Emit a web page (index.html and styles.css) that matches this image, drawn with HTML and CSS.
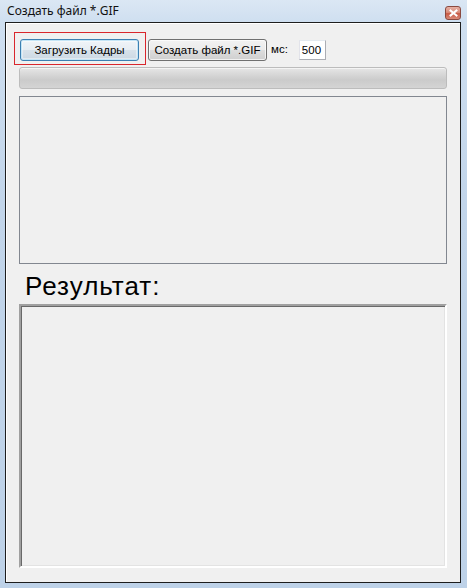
FILE: index.html
```html
<!DOCTYPE html>
<html lang="ru">
<head>
<meta charset="utf-8">
<title>Создать файл *.GIF</title>
<link rel="stylesheet" href="styles.css">
</head>
<body>
<div class="window">
  <div class="titlebar">
    <span class="title">Создать файл *.GIF</span>
    <div class="close">
      <svg width="9" height="8" viewBox="0 0 9 8"><path d="M1.5 1.5 L7.5 6.5 M7.5 1.5 L1.5 6.5" stroke="#fff" stroke-width="2" stroke-linecap="square"/></svg>
    </div>
  </div>
  <div class="client">
    <div class="toolbar">
      <div class="highlight">
        <button class="btn btn-default">Загрузить Кадры</button>
      </div>
      <button class="btn">Создать файл *.GIF</button>
      <span class="ms-label">мс:</span>
      <div class="num-input">500</div>
    </div>
    <div class="progress"></div>
    <div class="listbox"></div>
    <div class="result-label">Результат:</div>
    <div class="result-box"></div>
  </div>
</div>
</body>
</html>
```

FILE: styles.css
```css
html, body {
  margin: 0;
  padding: 0;
  width: 467px;
  height: 588px;
  overflow: hidden;
}
body {
  font-family: "Liberation Sans", Arial, sans-serif;
  background: #c3d6ea;
}
.window {
  width: 467px;
  height: 588px;
  display: flex;
  flex-direction: column;
  background: linear-gradient(to bottom, #dbe7f4 0px, #cfdff0 22px, #c2d5ea 200px, #bed2e8 588px);
}
.titlebar {
  height: 22px;
  position: relative;
  flex: none;
}
.title {
  position: absolute;
  left: 7px;
  top: 3px;
  font-family: "Noto Sans", "Open Sans", sans-serif;
  font-size: 12px;
  color: #111;
  line-height: 16px;
}
.close {
  position: absolute;
  left: 445px;
  top: 6px;
  width: 14px;
  height: 12px;
  border: 1px solid #8a4a40;
  border-radius: 3px;
  background: linear-gradient(to bottom, #e6b0a4 0%, #d98c7a 45%, #c85a45 55%, #d98a78 100%);
  display: flex;
  align-items: center;
  justify-content: center;
}
.client {
  margin: 0 6px 5px 5px;
  flex: 1;
  border: 1px solid #1e1e1e;
  background: #f0f0f0;
  box-shadow: inset 1px 1px 0 #ffffff;
  padding: 9px 13px 0 13px;
  display: flex;
  flex-direction: column;
}
.toolbar {
  display: flex;
  align-items: flex-start;
  height: 33px;
  margin-left: -5px;
}
.highlight {
  border: 1px solid #d9262c;
  width: 130px;
  height: 31px;
  box-sizing: content-box;
  padding: 0;
}
.btn {
  font-family: "Liberation Sans", Arial, sans-serif;
  font-size: 11.5px;
  color: #000;
  height: 22px;
  width: 119px;
  border: 1px solid #707070;
  border-radius: 3px;
  background: linear-gradient(to bottom, #f2f2f2 0%, #ebebeb 50%, #dddddd 51%, #cfcfcf 100%);
  box-shadow: inset 0 0 0 1px rgba(255,255,255,0.7);
  padding: 0;
  margin: 7px 0 0 2px;
  cursor: default;
}
.btn-default {
  margin: 6px 0 0 5px;
  border-color: #3c7fb1;
  background: linear-gradient(to bottom, #f0f4f8 0%, #e6edf3 50%, #d8e2ea 51%, #cbd8e3 100%);
  box-shadow: inset 0 0 0 1px #c4e5f6, inset 0 0 0 2px rgba(255,255,255,0.4);
}
.ms-label {
  font-size: 11.5px;
  margin: 11px 0 0 4px;
  color: #000;
}
.num-input {
  margin: 8px 0 0 11px;
  width: 23px;
  height: 18px;
  border: 1px solid #abadb3;
  border-top-color: #e3e9ef;
  border-left-color: #e2e3ea;
  background: #fff;
  font-size: 11.5px;
  line-height: 18px;
  padding-left: 2px;
  box-sizing: content-box;
}
.progress {
  margin-top: 2px;
  height: 20px;
  width: 426px;
  border: 1px solid #bcbcbc;
  border-radius: 3px;
  background: linear-gradient(to bottom, #e6e6e6 0%, #d6d6d6 35%, #cbcbcb 60%, #d4d4d4 100%);
  box-shadow: inset 0 1px 0 #f4f4f4;
}
.listbox {
  margin-top: 7px;
  height: 166px;
  width: 426px;
  border: 1px solid #828790;
  background: #f0f0f0;
}
.result-label {
  height: 40px;
  font-size: 26px;
  letter-spacing: 1px;
  line-height: 28px;
  padding: 8px 0 0 6px;
  box-sizing: border-box;
  color: #000;
}
.result-box {
  height: 264px;
  width: 428px;
  box-sizing: border-box;
  border-style: solid;
  border-width: 2px;
  border-color: #a0a0a0 #ffffff #ffffff #a0a0a0;
  box-shadow: inset 1px 1px 0 #696969, inset -1px -1px 0 #e3e3e3;
  background: #f0f0f0;
}
```
